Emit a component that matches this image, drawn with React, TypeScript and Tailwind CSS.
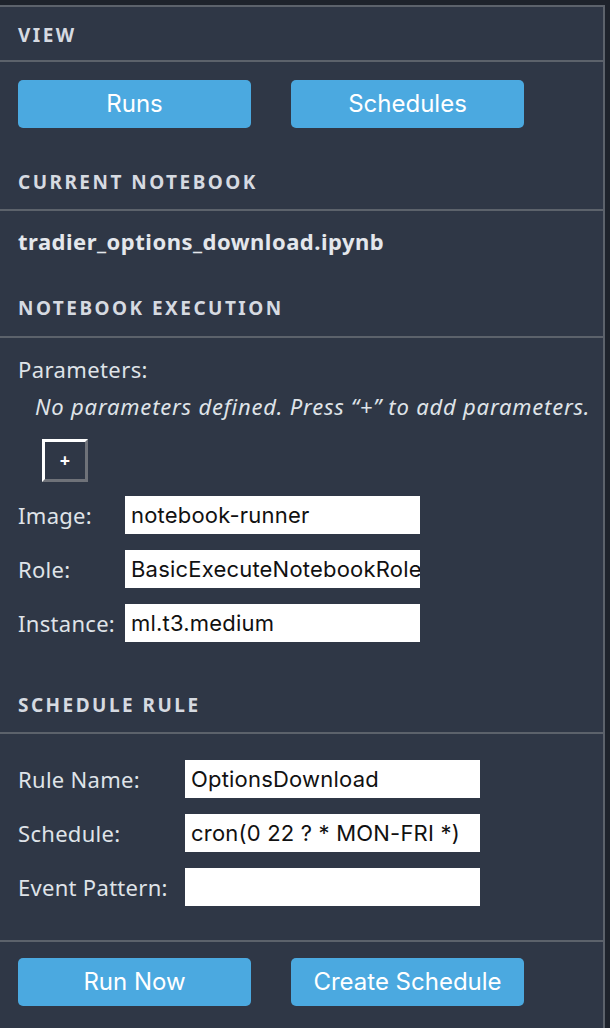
import React from "react";

const ui = { fontFamily: '"Noto Sans", "Open Sans", sans-serif' };
const sf = { fontFamily: 'Inter, "Liberation Sans", sans-serif' };

function Header({ title, h }: { title: string; h: string }) {
  return (
    <div className={`${h} flex items-center px-[18px] border-b-2 border-[#5c626b]`}>
      <span className="text-[19px] font-bold tracking-[0.13em] text-[#d6dae1] uppercase leading-none">
        {title}
      </span>
    </div>
  );
}

function BlueButton({ label }: { label: string }) {
  return (
    <button
      style={sf}
      className="w-[233px] h-[48px] rounded-[5px] bg-[#4ba9e0] text-white text-[24px] flex items-center justify-center"
    >
      {label}
    </button>
  );
}

function Field({ label, value, labelW }: { label: string; value: string; labelW: string }) {
  return (
    <div className="flex items-center h-[38px]">
      <div className={`${labelW} text-[22px] tracking-[0.3px] text-[#dfe3e8] shrink-0`} style={ui}>
        {label}
      </div>
      <div
        style={sf}
        className="w-[295px] h-[38px] bg-white text-[#111] text-[22px] tracking-[0.2px] pl-[6px] flex items-center overflow-hidden whitespace-nowrap"
      >
        {value}
      </div>
    </div>
  );
}

export default function App() {
  return (
    <div className="w-[610px] h-[1028px] bg-[#1e232c] pt-[5px] overflow-hidden" style={ui}>
      <div className="w-[605px] h-[1023px] border-t-2 border-r-2 border-[#5c626b] bg-[#2f3746] flex flex-col">
        {/* VIEW */}
        <div className="h-[55px] pt-[4px] flex items-center px-[18px] border-b-2 border-[#5c626b]">
          <span className="text-[19px] font-bold tracking-[0.13em] text-[#d6dae1] leading-none">VIEW</span>
        </div>
        <div className="pt-[18px] px-[18px] flex gap-[40px]">
          <BlueButton label="Runs" />
          <BlueButton label="Schedules" />
        </div>
        <div className="pt-[27px]">
          <Header title="Current Notebook" h="h-[56px]" />
        </div>
        <div className="pt-[16px] pb-[26px] px-[18px]">
          <div className="text-[22px] tracking-[0.5px] font-bold text-[#e4e7ec] leading-[28px]">
            tradier_options_download.ipynb
          </div>
        </div>
        <Header title="Notebook Execution" h="h-[57px]" />
        <div className="px-[18px] pt-[17px] flex flex-col">
          <div className="text-[22px] tracking-[0.4px] text-[#dfe3e8] leading-[28px]">Parameters:</div>
          <div className="mt-[9px] pl-[17px] text-[22px] tracking-[0.8px] italic text-[#dfe3e8] leading-[28px] whitespace-nowrap">
            No parameters defined. Press “+” to add parameters.
          </div>
          <div className="mt-[19px] ml-[24px] w-[46px] h-[43px] border-[3px] border-t-white border-l-white border-r-[#6f7279] border-b-[#6f7279] flex items-center justify-center text-white text-[18px] font-bold">
            +
          </div>
          <div className="mt-[14px] flex flex-col gap-[16px]">
            <Field label="Image:" value="notebook-runner" labelW="w-[107px]" />
            <Field label="Role:" value="BasicExecuteNotebookRole" labelW="w-[107px]" />
            <Field label="Instance:" value="ml.t3.medium" labelW="w-[107px]" />
          </div>
        </div>
        <div className="pt-[36px]">
          <Header title="Schedule Rule" h="h-[56px]" />
        </div>
        <div className="px-[18px] pt-[26px] pb-[34px] flex flex-col gap-[16px] border-b-2 border-[#5c626b]">
          <Field label="Rule Name:" value="OptionsDownload" labelW="w-[167px]" />
          <Field label="Schedule:" value="cron(0 22 ? * MON-FRI *)" labelW="w-[167px]" />
          <Field label="Event Pattern:" value="" labelW="w-[167px]" />
        </div>
        <div className="pt-[16px] px-[18px] flex gap-[40px]">
          <BlueButton label="Run Now" />
          <BlueButton label="Create Schedule" />
        </div>
      </div>
    </div>
  );
}
